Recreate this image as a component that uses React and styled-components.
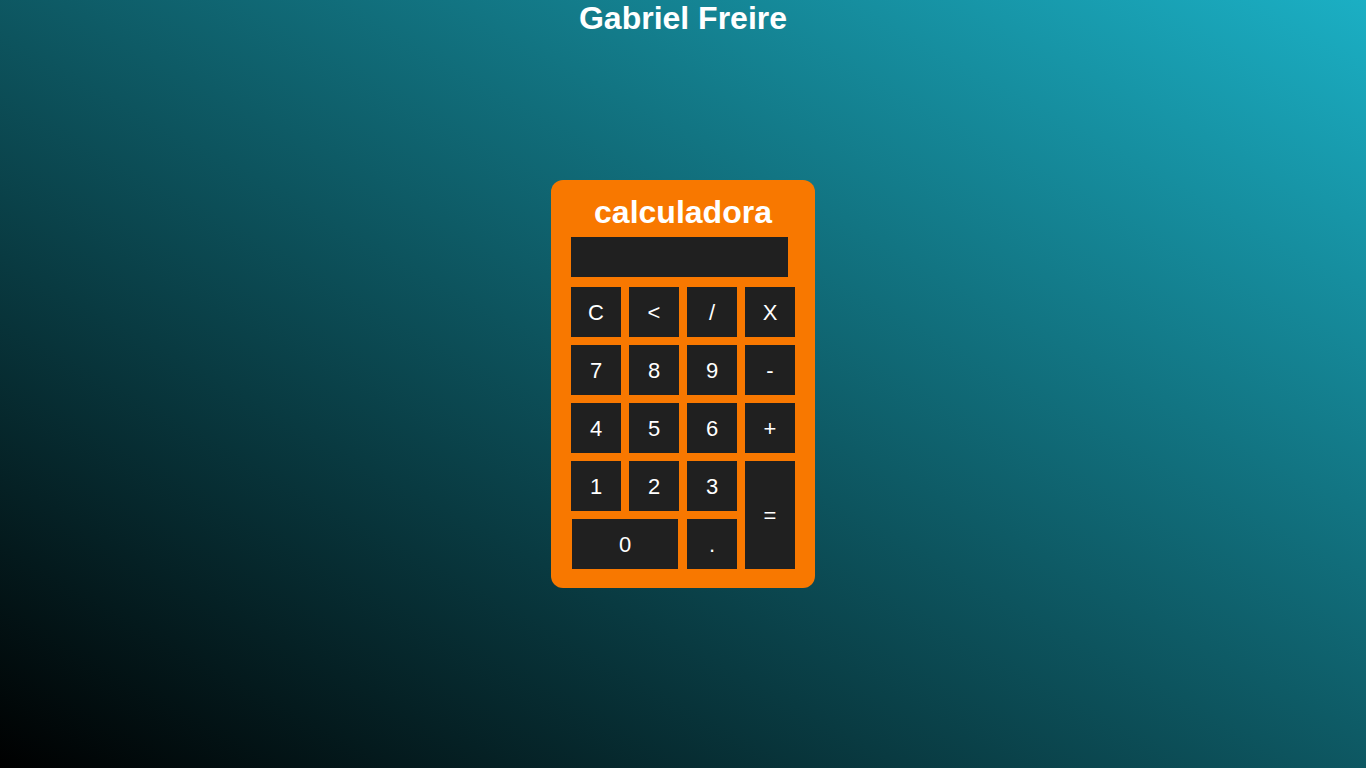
import React from "react";
import styled, { createGlobalStyle } from "styled-components";

const Global = createGlobalStyle`
  html, body { margin: 0; padding: 0; }
  body {
    font-family: "Liberation Sans", Arial, sans-serif;
    background: linear-gradient(to right top, #000000, #1bafc4);
    min-height: 100vh;
  }
`;

const Page = styled.div`
  display: grid;
  height: 100vh;
  grid-template: 1fr / 1fr;
`;

const Heading = styled.h1`
  grid-area: 1 / 1;
  align-self: start;
  justify-self: center;
  margin: 0;
  font-size: 32px;
  font-weight: bold;
  color: #ffffff;
`;

const Card = styled.div`
  grid-area: 1 / 1;
  align-self: center;
  justify-self: center;
  width: 224px;
  padding: 14px 20px 19px;
  background: #f87800;
  border-radius: 12px;
  display: flex;
  flex-direction: column;
`;

const Title = styled.h2`
  margin: 0;
  font-size: 32px;
  line-height: 36px;
  font-weight: bold;
  color: #ffffff;
  text-align: center;
`;

const Display = styled.div`
  width: 217px;
  height: 40px;
  margin: 7px 0 10px;
  background: #202020;
`;

const Keys = styled.div`
  display: grid;
  grid-template-columns: repeat(4, 50px);
  grid-auto-rows: 50px;
  gap: 8px;
`;

const Key = styled.button`
  border: none;
  padding: 2px 0 0;
  margin: 0;
  background: #202020;
  color: #ffffff;
  font-family: "Liberation Sans", Arial, sans-serif;
  font-size: 22px;
  cursor: pointer;
  grid-column: ${(p) => (p.$wide ? "span 2" : "auto")};
  grid-row: ${(p) => (p.$tall ? "span 2" : "auto")};
  width: ${(p) => (p.$wide ? "106px" : "auto")};
  justify-self: ${(p) => (p.$wide ? "end" : "stretch")};
  margin-right: ${(p) => (p.$wide ? "1px" : "0")};
`;

const rows = [
  ["C", "<", "/", "X"],
  ["7", "8", "9", "-"],
  ["4", "5", "6", "+"],
];

export default function App() {
  return (
    <>
      <Global />
      <Page>
        <Heading>Gabriel Freire</Heading>
        <Card>
          <Title>calculadora</Title>
          <Display />
          <Keys>
            {rows.flat().map((k) => (
              <Key key={k}>{k}</Key>
            ))}
            <Key>1</Key>
            <Key>2</Key>
            <Key>3</Key>
            <Key $tall>=</Key>
            <Key $wide>0</Key>
            <Key>.</Key>
          </Keys>
        </Card>
      </Page>
    </>
  );
}
